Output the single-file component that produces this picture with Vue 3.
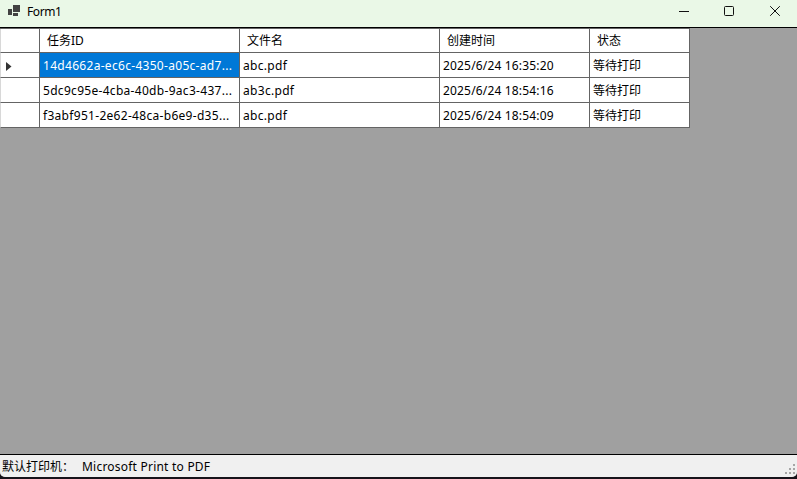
<script setup>
const columns = ['任务ID', '文件名', '创建时间', '状态']
const rows = [
  { id: '14d4662a-ec6c-4350-a05c-ad7...', file: 'abc.pdf', time: '2025/6/24 16:35:20', state: '等待打印' },
  { id: '5dc9c95e-4cba-40db-9ac3-437...', file: 'ab3c.pdf', time: '2025/6/24 18:54:16', state: '等待打印' },
  { id: 'f3abf951-2e62-48ca-b6e9-d35...', file: 'abc.pdf', time: '2025/6/24 18:54:09', state: '等待打印' },
]
</script>

<template>
  <div class="window">
    <header class="titlebar">
      <svg class="app-icon" width="14" height="12" viewBox="0 0 14 12">
        <path d="M5 0h7v7H5zM0 4h4v6H0zM5 8h5v3H5z" fill="#424242" />
      </svg>
      <span class="title">Form1</span>
      <div class="controls">
        <svg width="46" height="27" viewBox="0 0 46 27"><path d="M12 11.5h10" /></svg>
        <svg width="46" height="27" viewBox="0 0 46 27"><rect x="11.5" y="6.5" width="9" height="9" rx="1" /></svg>
        <svg width="46" height="27" viewBox="0 0 46 27"><path d="M11.2 6.2l9.6 9.6M20.8 6.2l-9.6 9.6" /></svg>
      </div>
    </header>

    <main class="workspace">
      <div class="grid">
        <div class="row head">
          <div class="cell"></div>
          <div v-for="c in columns" :key="c" class="cell"><span>{{ c }}</span></div>
        </div>
        <div v-for="(r, i) in rows" :key="r.id" class="row body">
          <div class="cell marker">
            <svg v-if="i === 0" width="6" height="9" viewBox="0 0 6 9"><path d="M0 0l5.5 4.5L0 9z" fill="#333" /></svg>
          </div>
          <div class="cell id" :class="{ selected: i === 0 }"><span>{{ r.id }}</span></div>
          <div class="cell file"><span>{{ r.file }}</span></div>
          <div class="cell time"><span>{{ r.time }}</span></div>
          <div class="cell"><span>{{ r.state }}</span></div>
        </div>
      </div>
    </main>

    <footer class="statusbar">
      <span class="label">默认打印机：</span>
      <span class="printer">Microsoft Print to PDF</span>
      <svg class="grip" width="12" height="12" viewBox="0 0 12 12">
        <path d="M9 1h2v2H9zM5 5h2v2H5zM9 5h2v2H9zM1 9h2v2H1zM5 9h2v2H5zM9 9h2v2H9z" fill="#a6a6a6" />
      </svg>
    </footer>
  </div>
</template>

<style>
body {
  background: #17131a;
}
</style>

<style scoped>
.window {
  display: flex;
  flex-direction: column;
  width: 797px;
  height: 477px;
  overflow: hidden;
  border-radius: 0 0 5px 5px;
  background: #a0a0a0;
  color: #000;
  font: 12px/16px "Noto Sans", "Noto Sans CJK SC", sans-serif;
  white-space: nowrap;
}
.titlebar {
  box-sizing: border-box;
  display: flex;
  flex: 0 0 28px;
  border-bottom: 1px solid #000;
  background: #eaf8e7;
}
.app-icon {
  margin: 5px 0 0 8px;
}
.title {
  margin: 4px 0 0 5px;
  letter-spacing: -0.4px;
}
.controls {
  display: flex;
  margin-left: auto;
  margin-right: -8px;
}
.controls svg {
  fill: none;
  stroke: #111;
  stroke-width: 1;
}
.workspace {
  flex: 1;
}
.grid {
  width: 690px;
  background: #fff;
  border-top: 1px solid #646464;
}
.row {
  display: grid;
  grid-template-columns: 40px 200px 200px 150px 100px;
  height: 25px;
}
.row.head {
  height: 24px;
}
.cell {
  display: flex;
  align-items: center;
  box-sizing: border-box;
  padding-left: 3px;
  border-right: 1px solid #646464;
  border-bottom: 1px solid #646464;
  overflow: hidden;
}
.body .cell {
  padding-top: 2px;
}
.cell:first-child {
  border-left: 1px solid #d8d8d8;
}
.head .cell {
  padding-left: 7px;
}
.body .marker {
  padding-left: 5px;
}
.id {
  letter-spacing: 0.3px;
}
.file {
  letter-spacing: 0.3px;
}
.time {
  letter-spacing: 0.17px;
}
.selected {
  background: #0078d7;
  color: #fff;
}
.statusbar {
  box-sizing: border-box;
  display: flex;
  flex: 0 0 23px;
  padding-left: 2px;
  border-top: 1px solid #000;
  background: #f0f0f0;
}
.label {
  width: 80px;
  padding-top: 4px;
}
.printer {
  padding-top: 4px;
  letter-spacing: 0.22px;
}
.grip {
  margin: 8px 1px 0 auto;
}
</style>
